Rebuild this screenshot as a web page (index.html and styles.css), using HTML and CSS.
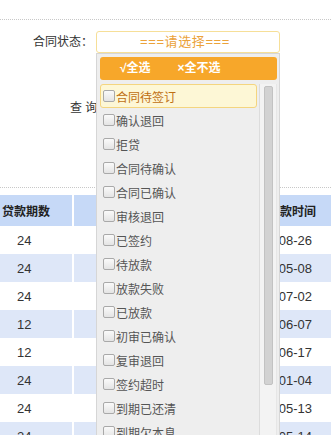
FILE: index.html
```html
<!DOCTYPE html>
<html lang="zh">
<head>
  <meta charset="UTF-8">
  <meta name="viewport" content="width=device-width, initial-scale=1.0"/>
  <title>合同查询</title>
  <link rel="stylesheet" href="styles.css">
</head>
<body>
  <div class="topbar"></div>

  <div class="search">
    <div class="field">
      <span class="label">合同状态：</span>
      <div class="multi">
        <div class="multi-input">===请选择===</div>
        <div class="multi-panel">
          <div class="multi-tools"><span class="all">√全选</span><span class="none">×全不选</span></div>
          <div class="multi-body">
            <ul class="multi-list">
              <li class="on"><i class="cb"></i>合同待签订</li>
              <li><i class="cb"></i>确认退回</li>
              <li><i class="cb"></i>拒贷</li>
              <li><i class="cb"></i>合同待确认</li>
              <li><i class="cb"></i>合同已确认</li>
              <li><i class="cb"></i>审核退回</li>
              <li><i class="cb"></i>已签约</li>
              <li><i class="cb"></i>待放款</li>
              <li><i class="cb"></i>放款失败</li>
              <li><i class="cb"></i>已放款</li>
              <li><i class="cb"></i>初审已确认</li>
              <li><i class="cb"></i>复审退回</li>
              <li><i class="cb"></i>签约超时</li>
              <li><i class="cb"></i>到期已还清</li>
              <li><i class="cb"></i>到期欠本息</li>
            </ul>
            <div class="scrollbar"><div class="thumb"></div></div>
          </div>
        </div>
      </div>
    </div>
    <div class="actions"><button class="btn-query">查 询</button></div>
  </div>

  <table class="grid">
    <colgroup><col class="c1"><col class="c2"><col class="c3"></colgroup>
    <thead>
      <tr><th class="t1">贷款期数</th><th></th><th class="t3">放款时间</th></tr>
    </thead>
    <tbody>
      <tr><td class="n">24</td><td></td><td class="d">2017-08-26</td></tr>
      <tr><td class="n">24</td><td></td><td class="d">2017-05-08</td></tr>
      <tr><td class="n">24</td><td></td><td class="d">2017-07-02</td></tr>
      <tr><td class="n">12</td><td></td><td class="d">2017-06-07</td></tr>
      <tr><td class="n">12</td><td></td><td class="d">2017-06-17</td></tr>
      <tr><td class="n">24</td><td></td><td class="d">2017-01-04</td></tr>
      <tr><td class="n">24</td><td></td><td class="d">2017-05-13</td></tr>
      <tr><td class="n">24</td><td></td><td class="d">2017-05-14</td></tr>
    </tbody>
  </table>
</body>
</html>
```

FILE: styles.css
```css
html, body { height: 100%; overflow: hidden; }
body { margin: 0; font-family: "Liberation Sans", "Noto Sans CJK SC", sans-serif; font-size: 12px; color: #333; background: #fff; }

.topbar { height: 19px; border-bottom: 1px dotted #c8c8c8; }

.search { padding-bottom: 71px; border-bottom: 1px dotted #c8c8c8; }
.field { display: flex; margin-top: 11px; height: 22px; }
.label { width: 93px; padding-right: 3px; text-align: right; line-height: 22px; font-size: 12px; color: #333; }

.multi { position: relative; width: 184px; z-index: 5; }
.multi-input { box-sizing: border-box; height: 22px; border: 1px solid #f6df98; border-radius: 3px; background: #fff; color: #eba23a; font-size: 13px; line-height: 20px; text-align: center; letter-spacing: 0.6px; padding-right: 6px; }
.multi-panel { position: absolute; top: 22px; left: 0; width: 184px; height: 400px; box-sizing: border-box; border: 1px solid #d6d6d6; background: #eee; padding: 3px 2px 0 3px; }
.multi-tools { height: 23px; background: #f7a72a; border-radius: 3px; color: #fff; font-weight: bold; font-size: 12px; line-height: 23px; }
.multi-tools .all { margin-left: 20px; }
.multi-tools .none { margin-left: 27px; }
.multi-body { display: flex; margin-top: 4px; }
.multi-list { list-style: none; margin: 0; padding: 0; width: 158px; }
.multi-list li { display: flex; align-items: center; height: 24px; box-sizing: border-box; padding-left: 3px; color: #555; font-size: 12px; border: 1px solid transparent; }
.multi-list li.on { background: #fdf7d6; border-color: #f4d57f; border-radius: 3px; color: #bf6f12; }
.cb { display: inline-block; box-sizing: border-box; width: 12px; height: 12px; margin-left: -1px; margin-right: 1px; border: 1px solid #a9a9a9; border-radius: 2px; background: linear-gradient(#fafafa, #e4e4e4); }

.scrollbar { width: 16px; margin-left: 2px; height: 360px; background: #f3f3f3; border-left: 1px solid #dcdcdc; border-right: 1px solid #e6e6e6; }
.thumb { height: 297px; margin: 2px 3px 0 4px; background: #d2d2d2; border: 1px solid #c2c2c2; border-radius: 2px; }

.actions { margin-top: 47px; height: 16px; }
.btn-query { margin-left: 70px; padding: 0; border: none; background: none; font-family: inherit; font-size: 12px; line-height: 16px; color: #333; }

.grid { margin: 7px 0 0 -2px; width: 335px; table-layout: fixed; border-collapse: separate; border-spacing: 2px 0; }
.c1 { width: 72px; }
.c2 { width: 164px; }
.c3 { width: 91px; }
.grid th { height: 31px; padding: 0; background: #c6d9f7; font-weight: bold; font-size: 12px; color: #222; text-align: center; }
.grid th.t1 { text-align: left; padding-left: 2px; }
.grid th.t3 { text-align: right; padding-right: 15px; }
.grid td { height: 28px; padding: 0; font-size: 13px; color: #333; }
.grid tbody tr:nth-child(even) td { background: #dee7f8; }
.grid td.n { padding-left: 17px; }
.grid td.d { text-align: right; padding-right: 19px; }
```
